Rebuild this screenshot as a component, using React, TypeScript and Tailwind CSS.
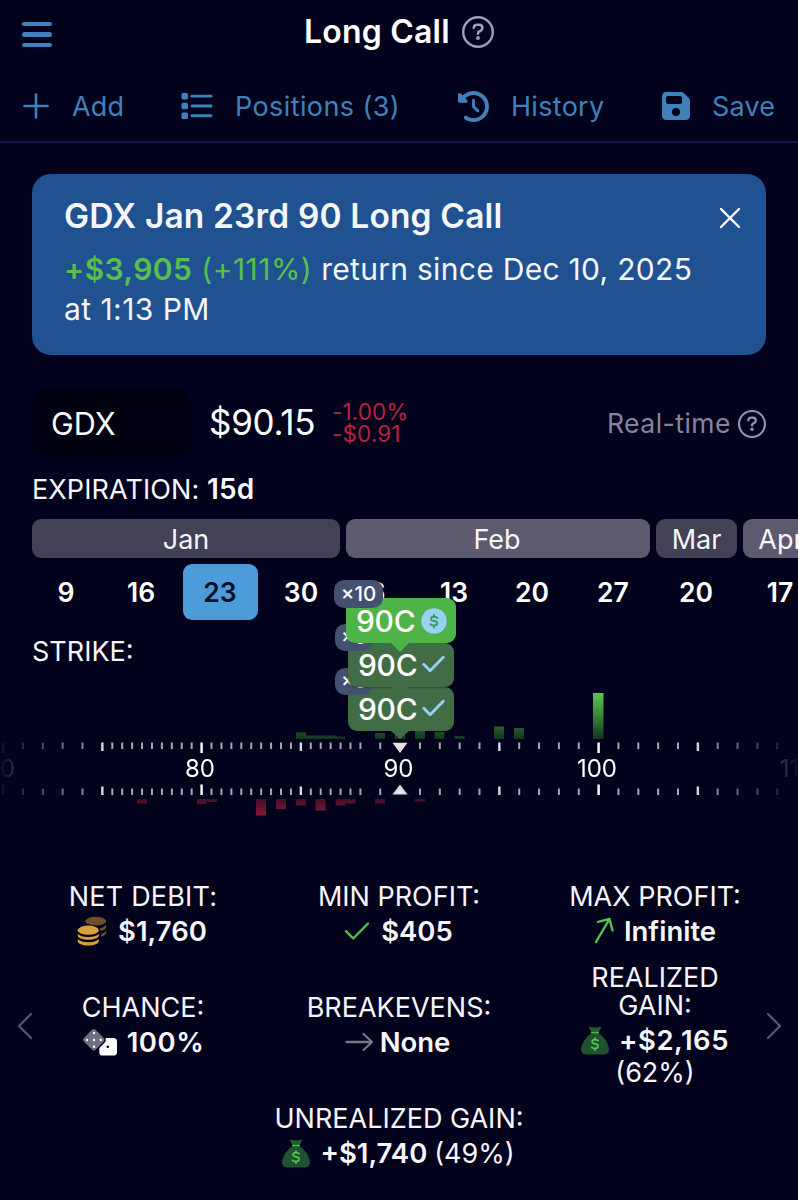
import type { ReactNode } from "react";
import { FaClockRotateLeft, FaFloppyDisk } from "react-icons/fa6";

const UNIT = 19.85;
const xOf = (strike: number) => 400 + (strike - 90) * UNIT;

const strikes: number[] = [];
for (let s = 70; s < 110; s += s >= 75 && s < 88 ? 0.5 : 1) strikes.push(s);

const calls: [number, number, number][] = [
  [296, 10, 6.5], [306, 30, 3.5], [336, 9, 2.5], [375, 10, 6], [395, 10, 9], [415, 10, 10],
  [434.5, 10, 7], [454.5, 10, 3], [494, 10, 12.5], [514, 10, 11], [593, 10.5, 46],
];
const puts: [number, number, number][] = [
  [137, 10, 4.5], [197, 10, 5], [207, 10, 3], [256, 10, 16.5], [276, 10, 10], [296, 10, 6.5],
  [315.5, 10, 11.5], [335.5, 10, 6.5], [345.5, 10, 4.5], [375, 10, 4.5], [415, 10, 2.5],
];

function Question({ className }: { className: string }) {
  return (
    <svg viewBox="0 0 32 32" className={className} fill="none" stroke="currentColor" strokeLinecap="round" strokeLinejoin="round">
      <circle cx="16" cy="16" r="14.8" strokeWidth="2.4" />
      <path d="M11.7 11.9c.3-2 1.600-3.100 3.400-3.100h1.800c2 0 3.500 1.300 3.500 3.100 0 1.400-.7 2.200-1.900 2.900l-1.500.9c-.7.4-1 .8-1 1.700v.4" strokeWidth="2.600" />
      <circle cx="16" cy="22" r="1.900" fill="currentColor" stroke="none" />
    </svg>
  );
}

function Check({ className, width }: { className: string; width: number }) {
  return (
    <svg viewBox="0 0 26 20" className={className} fill="none" stroke="currentColor" strokeWidth={width} strokeLinecap="round" strokeLinejoin="round">
      <path d="M2 10.2 9.2 17.5 24 2.5" />
    </svg>
  );
}

function Coins() {
  return (
    <svg viewBox="0 0 30 30" className="h-[30px] w-[30px]">
      <g fill="#6b5129">
        <ellipse cx="18.700" cy="5.200" rx="10.400" ry="4.400" />
        <path d="M29 8.700v2.600c0 1.700-1.900 3-5.200 3.800-.4-1.100-1.200-2-2.300-2.700 3.700-.4 6.200-1.700 7.500-3.700zM29 14.400v2.700c0 1.500-1.900 2.800-4.800 3.600v-3c2.200-.6 3.900-1.700 4.800-3.300z" />
      </g>
      <ellipse cx="11.300" cy="14.200" rx="11.800" ry="5.800" fill="#02021d" />
      <g fill="#d3a03d">
        <ellipse cx="11.300" cy="14.200" rx="10.600" ry="4.600" />
        <path d="M.8 17.700c2 2.200 5.900 3.300 10.500 3.300s8.500-1.100 10.500-3.300v2.100c0 2.200-4.800 4-10.500 4S.8 22 .8 19.800z" />
        <path d="M.8 23.100c2 2.200 5.900 3.200 10.500 3.200s8.500-1 10.500-3.200v2.300c0 2.200-4.800 4-10.500 4S.8 27.600.8 25.400z" />
      </g>
    </svg>
  );
}

function Dice() {
  return (
    <svg viewBox="0 0 36 30" className="h-[30px] w-[36px]">
      <rect x="17.300" y="11" width="17.700" height="17.500" rx="3.600" fill="#fff" />
      <rect x="2.800" y="3.800" width="18" height="18" rx="3.500" transform="rotate(45 11.800 12.800)" fill="#6f6e82" stroke="#02021d" strokeWidth="1.500" />
      <g fill="#fff">
        <circle cx="12" cy="6" r="1.200" />
        <circle cx="5" cy="12.900" r="1.200" />
        <circle cx="12" cy="12.900" r="1.200" />
        <circle cx="18.800" cy="12.900" r="1.200" />
        <circle cx="12" cy="19.800" r="1.200" />
      </g>
      <circle cx="25.800" cy="19.800" r="1.300" fill="#02021d" />
    </svg>
  );
}

function MoneyBag() {
  return (
    <svg viewBox="0 0 28 29" className="h-[29px] w-[28px]">
      <path d="M8.700.8c3.500 1 7.100 1 10.600 0 .7-.2 1.100.4.700 1L17.700 5.700h-7.400L8 1.800c-.4-.6 0-1.200.7-1z" fill="#245a32" />
      <path d="M10 7.500h8c4.400 2.800 9.900 10 9.900 15.800 0 3.200-1.900 5.200-5.100 5.200H5.200C2 28.500.1 26.500.1 23.300.1 17.500 5.600 10.300 10 7.500z" fill="#205230" />
      <path d="M10.600 6.600h6.800" stroke="#4fb64a" strokeWidth="1.600" strokeLinecap="round" />
      <path d="M17.100 14.700c-.9-.7-1.900-1-3.100-1-1.700 0-2.900.8-2.900 2.100 0 3 6 1.300 6 4.400 0 1.400-1.200 2.200-3.100 2.200-1.300 0-2.500-.4-3.400-1.100M14 12v1.700M14 22.400v1.800" fill="none" stroke="#59c653" strokeWidth="1.700" strokeLinecap="round" />
    </svg>
  );
}

function Stat({ label, children }: { label: ReactNode; children: ReactNode }) {
  return (
    <div className="flex flex-col items-center justify-center gap-[4px] pb-[1px] text-center">
      <div className="text-[27px] leading-[28px] whitespace-nowrap">{label}</div>
      <div className="text-[27.5px] leading-[32px] font-semibold whitespace-nowrap">{children}</div>
    </div>
  );
}

function ClosedFlag({ qty, z }: { qty: string; z: string }) {
  return (
    <div className={`relative flex h-[44px] w-[106px] items-center rounded-[9px] bg-[#426c45] pl-[10px] ${z}`}>
      <span className="w-[64px] tracking-[-0.3px]">90C</span>
      <Check className="mt-[-2px] h-[18px] w-[23px] text-[#98d0f6]" width={3.2} />
      <i className="absolute top-[44px] left-[43px] border-x-[9px] border-t-[8px] border-x-transparent border-t-[#426c45]" />
      <span className="absolute top-[-19px] left-[-13px] h-[27px] w-[38px] rounded-[10px] bg-[#44506f] pl-[6px] text-[20px] leading-[27px]">{qty}</span>
    </div>
  );
}

function Axis() {
  return (
    <svg viewBox="0 0 798 140" className="block h-[140px] w-[798px]">
      <defs>
        <linearGradient id="up" gradientUnits="userSpaceOnUse" x1="0" y1="13" x2="0" y2="59">
          <stop offset="0" stopColor="#58c74d" />
          <stop offset="0.500" stopColor="#378438" />
          <stop offset="1" stopColor="#12341f" />
        </linearGradient>
        <linearGradient id="down" gradientUnits="userSpaceOnUse" x1="0" y1="119" x2="0" y2="136">
          <stop offset="0" stopColor="#440d27" />
          <stop offset="1" stopColor="#8a1732" />
        </linearGradient>
        <linearGradient id="edge" x1="0" x2="1" y1="0" y2="0">
          <stop offset="0" stopColor="#fff" stopOpacity="0.040" />
          <stop offset="0.130" stopColor="#fff" />
          <stop offset="0.870" stopColor="#fff" />
          <stop offset="1" stopColor="#fff" stopOpacity="0.040" />
        </linearGradient>
        <mask id="fade" maskUnits="userSpaceOnUse" x="0" y="0" width="798" height="140">
          <rect width="798" height="140" fill="url(#edge)" />
        </mask>
      </defs>
      {calls.map(([x, w, h]) => (
        <rect key={x} x={x} y={59 - h} width={w} height={h} fill="url(#up)" />
      ))}
      {puts.map(([x, w, h]) => (
        <rect key={x} x={x} y={119} width={w} height={h} fill="url(#down)" />
      ))}
      <g mask="url(#fade)">
        {strikes.map((s) => {
          const ten = s % 10 === 0;
          const five = s % 5 === 0;
          const h = ten ? 10.5 : five ? 8.5 : 6.5;
          const w = five ? 2.4 : 2;
          const fill = ten ? "#fff" : five ? "#dcdce4" : "#a6a6b4";
          if (s === 90) return null;
          return (
            <g key={s} fill={fill}>
              <rect x={xOf(s) - w / 2 + 0.1} y={62.5} width={w} height={h} />
              <rect x={xOf(s) - w / 2 + 0.1} y={115 - h} width={w} height={h} />
            </g>
          );
        })}
        <path d="M392.500 62.800h15l-7.500 10.200zM392.500 114.600h15l-7.500-10.200z" fill="#e3e1e6" />
        <g fill="#fff" fontSize="24" textAnchor="middle" fontFamily="Inter, sans-serif">
          <text x="1" y="97">70</text>
          <text x="200" y="97">80</text>
          <text x="398.500" y="97">90</text>
          <text x="597" y="97">100</text>
          <text x="797" y="97">110</text>
        </g>
      </g>
    </svg>
  );
}

const days: [string, string][] = [
  ["9", "w-[76px]"], ["16", "w-[74px]"], ["23", "w-[84px]"], ["30", "w-[78px]"], ["6", "w-[74px]"],
  ["13", "w-[80px]"], ["20", "w-[76px]"], ["27", "w-[86px]"], ["20", "w-[80px]"], ["17", "w-[88px]"],
];

export default function App() {
  return (
    <div className="relative flex h-[1200px] w-[798px] flex-col overflow-hidden bg-[#02021d] font-['Inter',sans-serif] text-[#f6f5fb]">
      <header className="h-[143px] shrink-0 border-b-2 border-[#14163f]">
        <div className="flex h-[64px] items-center pl-[22px]">
          <div className="mt-[5px] flex w-[30px] flex-col gap-[6px]">
            <i className="h-[4.5px] rounded-full bg-[#3f82ba]" />
            <i className="h-[4.5px] rounded-full bg-[#3f82ba]" />
            <i className="h-[4.5px] rounded-full bg-[#3f82ba]" />
          </div>
          <h1 className="mt-[-1px] ml-[252px] w-[158px] text-[32px] font-semibold tracking-[0.2px] whitespace-nowrap text-white">Long Call</h1>
          <Question className="mt-[-1px] h-[32px] w-[32px] text-[#a09fb9]" />
        </div>
        <nav className="flex h-[84px] items-center text-[27px] text-[#3f82ba]">
          <svg viewBox="0 0 26 26" className="ml-[23px] h-[26px] w-[26px]" stroke="currentColor" strokeWidth="2.600" strokeLinecap="round">
            <path d="M13 1.500v23M1.500 13h23" />
          </svg>
          <span className="mt-[2px] ml-[23px] w-[109px] tracking-[0.2px]">Add</span>
          <svg viewBox="0 0 32 26" className="h-[26px] w-[32px]" fill="currentColor">
            <rect x="0.500" y="0" width="6.500" height="6.500" rx="1.500" />
            <rect x="0.500" y="9.700" width="6.500" height="6.500" rx="1.500" />
            <rect x="0.500" y="19.400" width="6.500" height="6.500" rx="1.500" />
            <rect x="9.500" y="1.700" width="22" height="2.900" rx="1.450" />
            <rect x="9.500" y="11.500" width="22" height="2.900" rx="1.450" />
            <rect x="9.500" y="21.300" width="22" height="2.900" rx="1.450" />
          </svg>
          <span className="mt-[2px] ml-[22px] w-[223px] tracking-[0.4px] whitespace-nowrap">Positions (3)</span>
          <FaClockRotateLeft className="h-[31px] w-[31px] shrink-0" />
          <span className="mt-[2px] ml-[22px] w-[151px] tracking-[0.3px]">History</span>
          <FaFloppyDisk className="h-[32px] w-[28px] shrink-0" />
          <span className="mt-[2px] ml-[22px] tracking-[0.2px]">Save</span>
        </nav>
      </header>

      <section className="mx-[32px] mt-[31px] h-[181px] shrink-0 rounded-[19px] bg-[#205190] px-[32px] pt-[22px]">
        <div className="flex h-[40px] items-center justify-between">
          <h2 className="text-[33.5px] font-semibold tracking-[0.15px] whitespace-nowrap text-[#f4f6fc]">GDX Jan 23rd 90 Long Call</h2>
          <svg viewBox="0 0 22 22" className="mt-[4px] mr-[-7px] h-[22px] w-[22px]" stroke="#fff" strokeWidth="2.400" strokeLinecap="round">
            <path d="m2 2 18 18M20 2 2 20" />
          </svg>
        </div>
        <p className="mt-[13px] text-[30px] leading-[40px] tracking-[0.45px] whitespace-nowrap">
          <span className="text-[#57c04c]"><b className="font-semibold">+$3,905</b> (+111%)</span> <span className="tracking-[0.3px]">return since Dec 10, 2025</span>
          <br />at 1:13 PM
        </p>
      </section>

      <section className="mt-[32px] flex h-[71px] shrink-0 items-center px-[32px]">
        <div className="flex h-[71px] w-[159px] items-center rounded-[19px] bg-[#010112] pt-[2px] pl-[19px] text-[30.5px] text-white">GDX</div>
        <div className="ml-[18px] w-[123px] text-[35px] tracking-[-0.3px] text-white">$90.15</div>
        <div className="text-[22.5px] leading-[22px] tracking-[0.1px] text-[#b82040]">-1.00%<br />-$0.91</div>
        <div className="mt-[2px] mr-[7px] ml-auto text-[26.5px] tracking-[0.5px] text-[#8584a0]">Real-time</div>
        <Question className="mt-[2px] h-[28px] w-[28px] text-[#9493ae]" />
      </section>

      <div className="mt-[15px] h-[32px] shrink-0 pl-[32px] text-[27px] leading-[33px] tracking-[0.1px]">
        EXPIRATION: <b className="text-[28px] leading-none font-semibold">15d</b>
      </div>

      <div className="mt-[14px] flex h-[39px] w-[900px] shrink-0 gap-[6px] pl-[32px] text-center text-[27px] leading-[41px]">
        <div className="w-[308px] rounded-[9px] bg-[#424156]">Jan</div>
        <div className="w-[304px] rounded-[9px] bg-[#5d5a6e] pr-[2px]">Feb</div>
        <div className="w-[81px] rounded-[9px] bg-[#424156]">Mar</div>
        <div className="w-[81px] rounded-[9px] bg-[#5d5a6e] pr-[5px]">Apr</div>
      </div>

      <div className="mt-[6px] flex h-[56px] w-[900px] shrink-0 items-center pl-[28px] text-[26.5px] font-semibold text-white">
        {days.map(([day, w], i) => (
          <div key={i} className={`flex shrink-0 justify-center ${w}`}>
            <span
              className={
                day === "23"
                  ? "flex h-[56px] w-[75px] items-center justify-center rounded-[9px] bg-[#4b9cd8] pt-[2px] text-[#051027]"
                  : "flex h-[56px] items-center pt-[2px]"
              }
            >
              {day}
            </span>
          </div>
        ))}
      </div>

      <section className="relative mt-[16px] h-[185px] shrink-0">
        <div className="h-[44px] pl-[32px] text-[27px] leading-[32px]">STRIKE:</div>
        <Axis />
        <div className="absolute top-[-38px] left-[346px] flex flex-col items-center text-[30px] font-medium text-white">
          <div className="relative z-30 flex h-[45px] w-[110px] items-center rounded-[9px] bg-[#4fb447] pl-[10px]">
            <span className="mt-[2px] w-[65px] tracking-[-0.3px]">90C</span>
            <svg viewBox="0 0 26 26" className="h-[26px] w-[26px]">
              <circle cx="13" cy="13" r="12.700" fill="#98d0f6" />
              <path d="M16.300 9.900c-.9-.8-2-1.100-3.300-1.100-1.800 0-3 .8-3 2.100 0 3 6.300 1.300 6.300 4.300 0 1.400-1.300 2.200-3.300 2.200-1.300 0-2.600-.4-3.500-1.200M13 6.700v2.100M13 17.400v2.100" fill="none" stroke="#3a9b5a" strokeWidth="1.900" strokeLinecap="round" />
            </svg>
            <i className="absolute top-[45px] left-[45px] border-x-[9px] border-t-[9px] border-x-transparent border-t-[#4fb447]" />
            <span className="absolute top-[-18px] left-[-12px] h-[28px] w-[49px] rounded-[10px] bg-[#44506f] text-center text-[20.5px] leading-[27px]">×10</span>
          </div>
          <ClosedFlag qty="×5" z="z-20 shadow-[0_1px_2px_rgba(20,50,30,0.5)]" />
          <ClosedFlag qty="×5" z="z-10" />
        </div>
      </section>

      <section className="mt-[62px] flex shrink-0 items-center">
        <div className="relative grid w-[798px] grid-cols-3 gap-y-[16px] px-[15px]">
          <Stat label={<span className="tracking-[0.2px]">NET DEBIT:</span>}>
            <span className="mr-[2px] flex items-center gap-[11px]"><Coins />$1,760</span>
          </Stat>
          <Stat label="MIN PROFIT:">
            <span className="mr-[1px] flex items-center gap-[11px]"><Check className="h-[20px] w-[26px] text-[#55c24b]" width={2.4} />$405</span>
          </Stat>
          <Stat label="MAX PROFIT:">
            <span className="flex items-center gap-[10px]">
              <svg viewBox="0 0 20 28" className="mt-[-3px] h-[28px] w-[20px]" fill="none" stroke="#55c24b" strokeWidth="2.400" strokeLinecap="round" strokeLinejoin="round">
                <path d="M2 26 15.500 3M4 5.800 15.500 3l3 11.500" />
              </svg>
              Infinite
            </span>
          </Stat>
          <Stat label="CHANCE:">
            <span className="mb-[1px] flex items-center gap-[9px]"><Dice /><span className="tracking-[0.5px]">100%</span></span>
          </Stat>
          <Stat label="BREAKEVENS:">
            <span className="mr-[3px] mb-[1px] flex items-center gap-[7px]">
              <svg viewBox="0 0 28 20" className="h-[20px] w-[28px]" fill="none" stroke="#777681" strokeWidth="2.300" strokeLinecap="round" strokeLinejoin="round">
                <path d="M1.500 10H27M18.500 2l8.500 8-8.500 8" />
              </svg>
              None
            </span>
          </Stat>
          <Stat label={<>REALIZED<br />GAIN:</>}>
            <span className="flex items-center justify-center gap-[10px]"><MoneyBag /><span className="tracking-[0.5px]">+$2,165</span></span>
            <span className="text-[27px] font-normal">(62%)</span>
          </Stat>
          <div className="col-span-3 mt-[-1px]">
            <Stat label="UNREALIZED GAIN:">
              <span className="mr-[1px] flex items-center gap-[10px]"><MoneyBag /><span>+$1,740 <span className="text-[27px] font-normal">(49%)</span></span></span>
            </Stat>
          </div>
          <svg viewBox="0 0 16 28" className="absolute top-[129px] left-[17px] h-[28px] w-[16px]" fill="none" stroke="#56556c" strokeWidth="2.300" strokeLinecap="round" strokeLinejoin="round">
            <path d="M14 2 2 14l12 12" />
          </svg>
          <svg viewBox="0 0 16 28" className="absolute top-[129px] right-[16px] h-[28px] w-[16px]" fill="none" stroke="#56556c" strokeWidth="2.300" strokeLinecap="round" strokeLinejoin="round">
            <path d="m2 2 12 12L2 26" />
          </svg>
        </div>
      </section>
    </div>
  );
}
